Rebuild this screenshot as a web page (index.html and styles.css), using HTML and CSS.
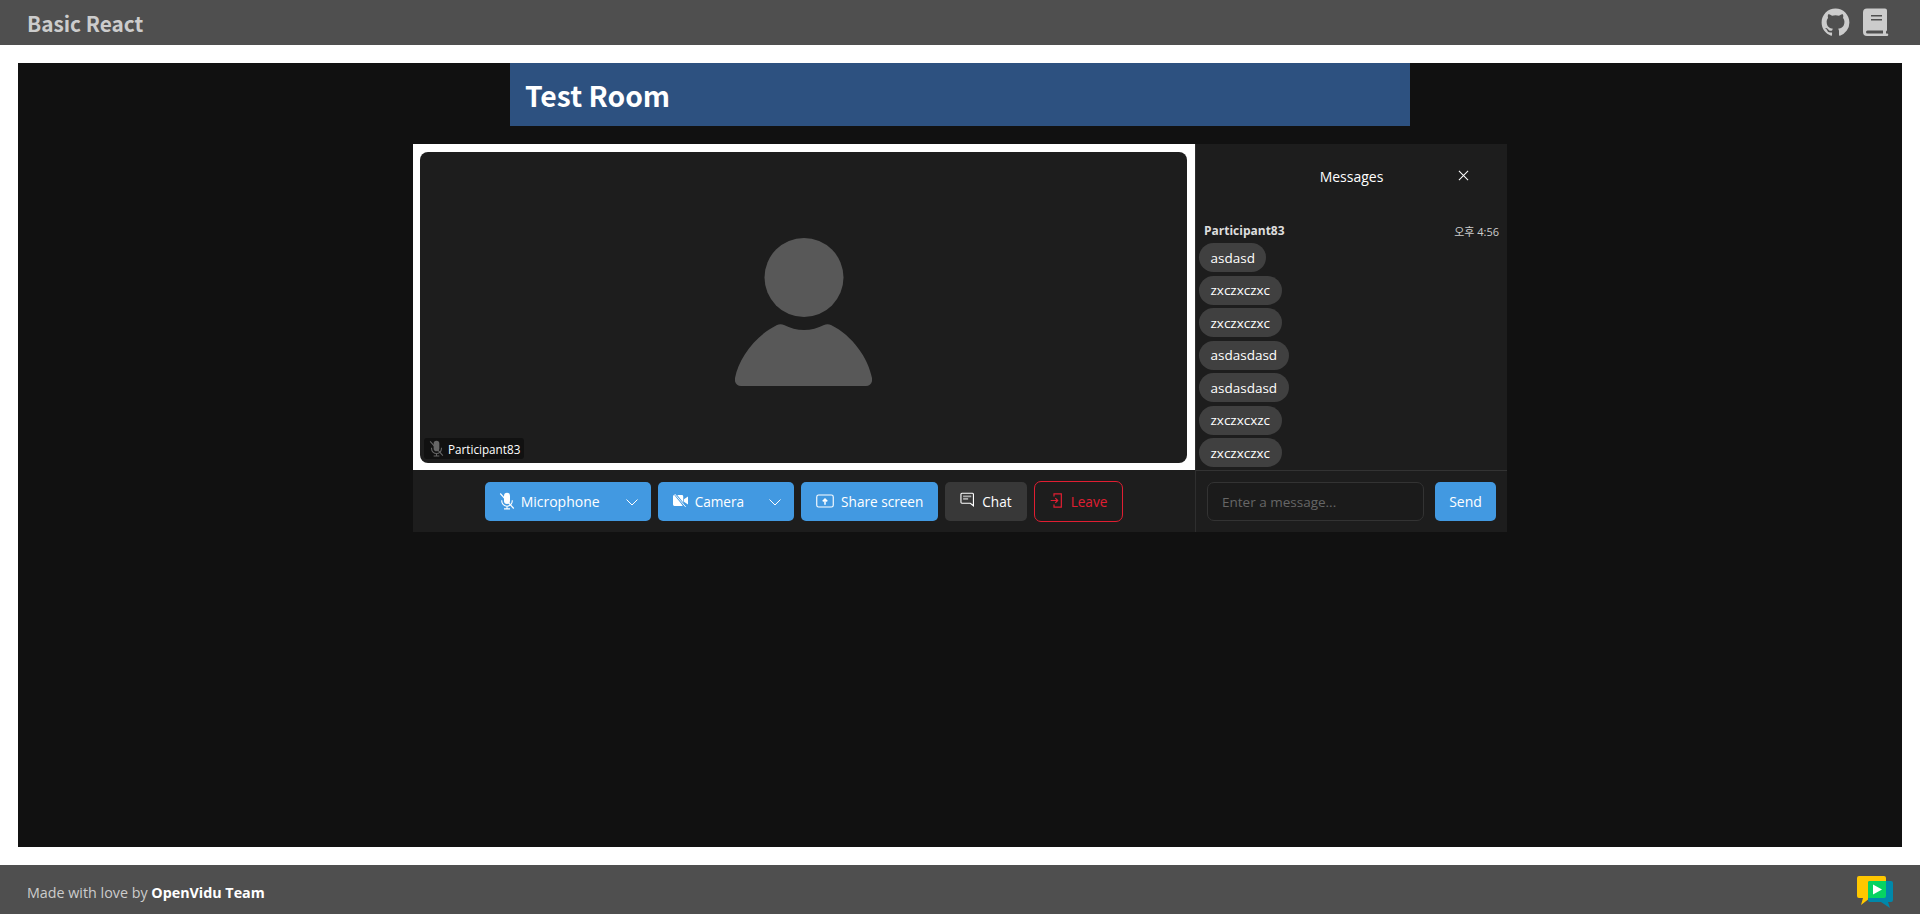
FILE: index.html
```html
<!DOCTYPE html>
<html lang="en">
<head>
    <meta charset="UTF-8">
    <meta name="viewport" content="width=device-width, initial-scale=1.0">
    <title>Basic React</title>
    <link rel="stylesheet" href="styles.css">
</head>
<body>
    <header class="app-header">
        <span class="app-title">Basic React</span>
        <div class="header-icons">
            <svg class="icon-github" viewBox="0 0 24 24"><path d="M12 .5C5.65.5.5 5.65.5 12c0 5.08 3.3 9.39 7.86 10.91.58.1.79-.25.79-.55v-2.14c-3.2.7-3.87-1.36-3.87-1.36-.52-1.33-1.28-1.68-1.28-1.68-1.04-.71.08-.7.08-.7 1.15.08 1.76 1.19 1.76 1.19 1.03 1.75 2.69 1.25 3.35.95.1-.74.4-1.25.73-1.54-2.55-.29-5.24-1.28-5.24-5.69 0-1.26.45-2.28 1.19-3.09-.12-.29-.52-1.46.11-3.05 0 0 .97-.31 3.17 1.18a11 11 0 0 1 5.77 0c2.2-1.49 3.17-1.18 3.17-1.18.63 1.59.23 2.76.11 3.05.74.81 1.19 1.83 1.19 3.09 0 4.42-2.69 5.39-5.26 5.68.41.36.78 1.06.78 2.14v3.17c0 .31.21.66.8.55A11.5 11.5 0 0 0 23.5 12C23.5 5.65 18.35.5 12 .5z"/></svg>
            <svg class="icon-book" viewBox="0 0 26 28"><path fill-rule="evenodd" d="M4 0h18a2 2 0 0 1 2 2v19.5a1.5 1.5 0 0 1-1 1.4V25h1a1 1 0 0 1 0 2.600H4a4 4 0 0 1-4-4V4a4 4 0 0 1 4-4zM8 6.500v1.600h11V6.500zM8 10.500v1.600h11v-1.600zM4.500 22a1.500 1.500 0 0 0 0 3H20v-3z"/></svg>
        </div>
    </header>

    <main class="page">
        <div class="room-title">Test Room</div>

        <div class="room">
            <div class="room-left">
                <div class="stage">
                    <div class="video-tile">
                        <svg class="avatar" viewBox="0 0 137 148"><circle cx="69" cy="39.500" r="39.500"/><path d="M42 87c2-1 5-1 7 0 6 3 13 5 20 5s14-2 20-5c2-1 5-1 7 0 22 11 37 33 41 53 1 4-2 8-6 8H6c-4 0-7-4-6-8 4-20 20-42 42-53z"/></svg>
                        <div class="nickname">
                            <svg class="mic-small" viewBox="0 0 24 24"><use href="#mic-off"/></svg>
                            <span>Participant83</span>
                        </div>
                    </div>
                </div>
                <div class="toolbar">
                    <div class="split-btn">
                        <button class="btn btn-primary btn-main btn-mic">
                            <svg class="btn-icon icon-mic" viewBox="0 0 24 24"><use href="#mic-off"/></svg>
                            Microphone
                        </button>
                        <button class="btn btn-primary btn-caret"><svg viewBox="0 0 14 14"><path d="M1.500 4.500 7 10l5.500-5.500"/></svg></button>
                    </div>
                    <div class="split-btn">
                        <button class="btn btn-primary btn-main">
                            <svg class="btn-icon icon-cam" viewBox="1 3 22 18"><path d="M3 4h11a2 2 0 0 1 2 2v12a2 2 0 0 1-2 2H3a2 2 0 0 1-2-2V6a2 2 0 0 1 2-2zM17 10l6-4v12l-6-4z" fill="currentColor"/><path d="M3 1.500l17 21" stroke="#4299e1" stroke-width="3.500" fill="none"/><path d="M3.500 2.500l17 20" stroke="currentColor" stroke-width="1.300" fill="none"/></svg>
                            Camera
                        </button>
                        <button class="btn btn-primary btn-caret"><svg viewBox="0 0 14 14"><path d="M1.500 4.500 7 10l5.500-5.500"/></svg></button>
                    </div>
                    <button class="btn btn-primary">
                        <svg class="btn-icon icon-share" viewBox="0 3 24 18" fill="none" stroke="currentColor" stroke-width="1.500"><rect x="1" y="4" width="22" height="16" rx="2.500"/><path d="M12 17v-7M9 12.500 12 9.500l3 3" stroke-width="2"/></svg>
                        Share screen
                    </button>
                    <button class="btn btn-dark">
                        <svg class="btn-icon icon-chat" viewBox="0 0 24 24" fill="none" stroke="currentColor" stroke-width="1.800"><path d="M3 2h17a1.500 1.500 0 0 1 1.500 1.500V22l-5-4H3a1.500 1.500 0 0 1-1.500-1.500v-13A1.500 1.500 0 0 1 3 2z"/><path d="M5 7h13M5 11h8" stroke-width="2.500" stroke="#aaa"/></svg>
                        Chat
                    </button>
                    <button class="btn btn-leave">
                        <svg class="btn-icon icon-leave" viewBox="1 1 18 22" fill="none" stroke="currentColor" stroke-width="1.800"><path d="M7 6V2h11v20H7v-4"/><path d="M2 12h10M9 8.500l3.500 3.500L9 15.500"/></svg>
                        Leave
                    </button>
                </div>
            </div>

            <aside class="chat">
                <div class="chat-header">
                    <span class="chat-heading">Messages</span>
                    <svg class="chat-close" viewBox="0 0 12 12"><path d="M1 1l10 10M11 1 1 11"/></svg>
                </div>
                <div class="chat-meta">
                    <span class="chat-name">Participant83</span>
                    <span class="chat-time">오후 4:56</span>
                </div>
                <ul class="chat-list">
                    <li class="bubble">asdasd</li>
                    <li class="bubble">zxczxczxc</li>
                    <li class="bubble">zxczxczxc</li>
                    <li class="bubble">asdasdasd</li>
                    <li class="bubble">asdasdasd</li>
                    <li class="bubble">zxczxcxzc</li>
                    <li class="bubble">zxczxczxc</li>
                </ul>
                <div class="chat-form">
                    <input class="chat-input" type="text" placeholder="Enter a message...">
                    <button class="btn btn-primary btn-send">Send</button>
                </div>
            </aside>
        </div>
    </main>

    <footer class="app-footer">
        <span class="footer-text">Made with love by <strong>OpenVidu Team</strong></span>
        <svg class="footer-logo" viewBox="0 0 36 32">
            <path d="M2 0h25a2 2 0 0 1 2 2v18a2 2 0 0 1-2 2H13l-9 7 2-7H2a2 2 0 0 1-2-2V2a2 2 0 0 1 2-2z" fill="#ffc700"/>
            <path d="M13 5h21a2 2 0 0 1 2 2v17a2 2 0 0 1-2 2h-3l2 6-9-6H13a2 2 0 0 1-2-2V7a2 2 0 0 1 2-2z" fill="#0088aa"/>
            <path d="M13 5h16v15a2 2 0 0 1-2 2H11V7a2 2 0 0 1 2-2z" fill="#06d362"/>
            <path d="M16 8.500v10l9-5z" fill="#fff"/>
        </svg>
    </footer>

    <svg class="sprite" aria-hidden="true">
        <symbol id="mic-off" viewBox="0 0 24 24">
            <path d="M12 1a4 4 0 0 1 4 4v7a4 4 0 0 1-8 0V5a4 4 0 0 1 4-4z" fill="currentColor"/>
            <path d="M5 11v1a7 7 0 0 0 14 0v-1M12 19v3M8 22.500h8" fill="none" stroke="currentColor" stroke-width="1.500"/>
            <path d="M3 2l18 20" fill="none" stroke="currentColor" stroke-width="1.500"/>
        </symbol>
    </svg>
</body>
</html>
```

FILE: styles.css
```css
* {
    box-sizing: border-box;
}
html {
    overflow: hidden;
}
body {
    margin: 0;
    height: 914px;
    overflow: hidden;
    display: flex;
    flex-direction: column;
    background: #fff;
    font-family: "Open Sans", "Noto Sans CJK KR", sans-serif;
    color: #fff;
}
.sprite {
    display: none;
}
.app-header {
    height: 45px;
    flex: none;
    padding: 0 31px 0 27px;
    background: #4f4f4f;
    display: flex;
    align-items: center;
    justify-content: space-between;
}
.app-title {
    font-family: "Noto Sans CJK KR", sans-serif;
    font-size: 20.800px;
    font-weight: 700;
    color: #ccc;
}
.header-icons {
    display: flex;
    align-items: center;
    gap: 13px;
}
.icon-github {
    width: 29px;
    height: 29px;
    fill: #ccc;
}
.icon-book {
    width: 26px;
    height: 29px;
    fill: #ccc;
}
.page {
    flex: 1;
    margin: 18px;
    background: #111;
    display: flex;
    flex-direction: column;
    align-items: center;
}
.room-title {
    width: 900px;
    height: 63px;
    padding-left: 15px;
    background: #2d5180;
    display: flex;
    align-items: center;
    font-family: "Noto Sans CJK KR", sans-serif;
    font-size: 28.300px;
    font-weight: 700;
}
.room {
    width: 1094px;
    height: 388px;
    margin-top: 18px;
    display: flex;
}
.room-left {
    width: 782px;
    display: flex;
    flex-direction: column;
}
.stage {
    height: 326px;
    padding: 8px 8px 7px 7px;
    background: #fff;
}
.video-tile {
    position: relative;
    height: 100%;
    background: #1d1d1d;
    border-radius: 8px;
    display: flex;
    align-items: center;
    justify-content: center;
}
.avatar {
    width: 137px;
    height: 148px;
    fill: #585858;
    margin-top: 9px;
}
.nickname {
    position: absolute;
    left: 4px;
    bottom: 4px;
    height: 21px;
    padding: 0 4px;
    background: #111;
    border-radius: 3px;
    display: flex;
    align-items: center;
    gap: 3px;
    font-size: 11.700px;
}
.mic-small {
    width: 17px;
    height: 17px;
    color: #666;
}
.toolbar {
    flex: 1;
    padding-top: 1px;
    background: #1d1d1d;
    display: flex;
    align-items: center;
    justify-content: center;
    gap: 7px;
}
.btn {
    height: 39px;
    padding: 0 15px;
    border: 0;
    border-radius: 5px;
    display: flex;
    align-items: center;
    gap: 7px;
    color: #fff;
    font-family: "Open Sans", sans-serif;
    font-size: 13.600px;
    white-space: nowrap;
}
.btn-primary {
    background: #4299e1;
}
.btn-dark {
    background: #383838;
}
.btn-leave {
    height: 41px;
    background: transparent;
    border: 1px solid #e01e32;
    border-radius: 7px;
    color: #e01e32;
    gap: 9px;
}
.btn-icon {
    flex: none;
    margin-bottom: 2px;
}
.icon-mic {
    width: 18px;
    height: 18px;
    margin-left: -2px;
    margin-right: -2px;
}
.icon-cam {
    width: 15px;
    height: 13px;
}
.icon-share {
    width: 18px;
    height: 14px;
}
.icon-chat {
    width: 15px;
    height: 15px;
    margin-bottom: 4px;
}
.icon-leave {
    width: 12px;
    height: 15px;
}
.split-btn {
    display: flex;
}
.btn-main {
    padding-right: 24px;
    border-radius: 5px 0 0 5px;
}
.btn-mic {
    font-size: 14px;
    padding-right: 25px;
}
.btn-caret {
    padding: 0 12px 0 0;
    border-radius: 0 5px 5px 0;
}
.btn-caret svg {
    width: 14px;
    height: 14px;
    fill: none;
    stroke: #fff;
    stroke-width: 1;
}
.chat {
    flex: 1;
    background: #1d1d1d;
    display: flex;
    flex-direction: column;
    border-left: 1px solid #2e2e2e;
}
.chat-header {
    position: relative;
    height: 66px;
    padding-top: 23px;
    text-align: center;
    font-size: 14px;
}
.chat-close {
    position: absolute;
    top: 26px;
    right: 38px;
    width: 11px;
    height: 11px;
    stroke: #fff;
    stroke-width: 1.100;
}
.chat-meta {
    height: 33px;
    padding: 12px 8px 0 8px;
    display: flex;
    justify-content: space-between;
    align-items: flex-start;
}
.chat-name {
    font-size: 12px;
    font-weight: 700;
    color: #ddd;
}
.chat-time {
    font-size: 11px;
    color: #ccc;
    padding-top: 1px;
}
.chat-list {
    list-style: none;
    margin: 0;
    padding: 0 0 0 3px;
    display: flex;
    flex-direction: column;
    align-items: flex-start;
    gap: 3.500px;
    height: 227px;
}
.bubble {
    height: 29px;
    padding: 0 11.500px;
    background: #404040;
    border-radius: 15px;
    display: flex;
    align-items: center;
    font-size: 13.500px;
}
.chat-form {
    flex: 1;
    border-top: 1px solid #333;
    padding: 11px 9px 0 11px;
    display: flex;
    gap: 11px;
}
.chat-input {
    width: 217px;
    height: 39px;
    padding: 0 14px;
    background: #1b1b1b;
    border: 1px solid #333;
    border-radius: 7px;
    color: #fff;
    font-family: "Open Sans", sans-serif;
    font-size: 13.500px;
}
.chat-input::placeholder {
    color: #666;
}
.btn-send {
    width: 61px;
    justify-content: center;
    padding: 0;
    font-size: 14px;
}
.app-footer {
    height: 49px;
    flex: none;
    padding: 5px 27px 0;
    background: #4f4f4f;
    display: flex;
    align-items: center;
    justify-content: space-between;
}
.footer-text {
    font-size: 14.300px;
    color: #ccc;
}
.footer-text strong {
    color: #fff;
}
.footer-logo {
    width: 36px;
    height: 32px;
}
```
